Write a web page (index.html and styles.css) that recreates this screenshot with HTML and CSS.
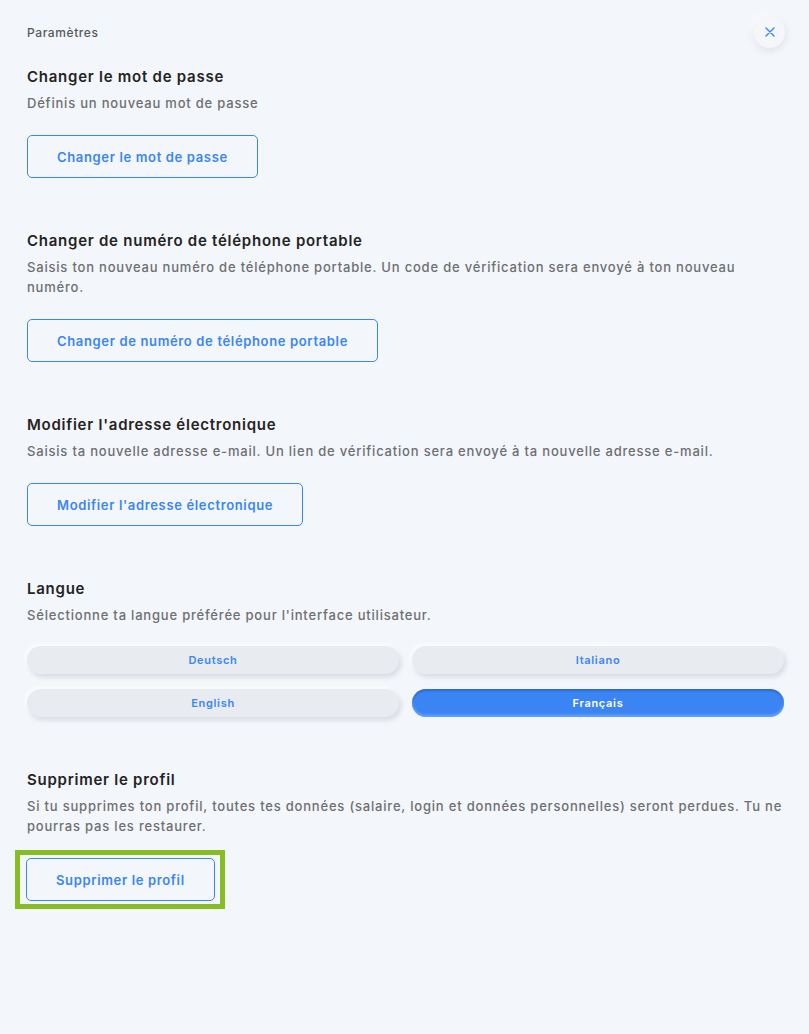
FILE: index.html
```html
<!DOCTYPE html>
<html lang="fr">
<head>
<meta charset="utf-8">
<title>Paramètres</title>
<link rel="stylesheet" href="styles.css">
</head>
<body>
<div class="page">
  <header class="topbar">
    <span class="title">Paramètres</span>
    <button class="close" aria-label="Fermer">
      <svg width="10" height="10" viewBox="0 0 10 10"><path d="M1 1L9 9M9 1L1 9" stroke="#3a86f5" stroke-width="1.4" stroke-linecap="round" fill="none"/></svg>
    </button>
  </header>

  <section class="section">
    <h2 class="heading">Changer le mot de passe</h2>
    <p class="desc">Définis un nouveau mot de passe</p>
    <button class="btn">Changer le mot de passe</button>
  </section>

  <section class="section">
    <h2 class="heading">Changer de numéro de téléphone portable</h2>
    <p class="desc">Saisis ton nouveau numéro de téléphone portable. Un code de vérification sera envoyé à ton nouveau numéro.</p>
    <button class="btn">Changer de numéro de téléphone portable</button>
  </section>

  <section class="section">
    <h2 class="heading">Modifier l'adresse électronique</h2>
    <p class="desc">Saisis ta nouvelle adresse e-mail. Un lien de vérification sera envoyé à ta nouvelle adresse e-mail.</p>
    <button class="btn">Modifier l'adresse électronique</button>
  </section>

  <section class="section">
    <h2 class="heading">Langue</h2>
    <p class="desc">Sélectionne ta langue préférée pour l'interface utilisateur.</p>
    <div class="langs">
      <button class="lang">Deutsch</button>
      <button class="lang">Italiano</button>
      <button class="lang">English</button>
      <button class="lang active">Français</button>
    </div>
  </section>

  <section class="section">
    <h2 class="heading">Supprimer le profil</h2>
    <p class="desc">Si tu supprimes ton profil, toutes tes données (salaire, login et données personnelles) seront perdues. Tu ne pourras pas les restaurer.</p>
    <div class="highlight">
      <button class="btn">Supprimer le profil</button>
    </div>
  </section>
</div>
</body>
</html>
```

FILE: styles.css
```css
* { box-sizing: border-box; }
html, body { margin: 0; padding: 0; }
body {
  background: #f3f6fa;
  font-family: "Inter", "Liberation Sans", sans-serif;
  color: #222;
  min-height: 1034px;
}
.page {
  padding: 0 25px 40px 27px;
}
.topbar {
  display: flex;
  justify-content: space-between;
  align-items: center;
  padding-top: 16px;
  height: 48px;
  margin-right: -1px;
}
.title {
  font-size: 12px;
  font-weight: 500;
  letter-spacing: 0.6px;
  color: #555a60;
}
.close {
  width: 31px;
  height: 31px;
  border-radius: 50%;
  border: none;
  background: #f4f6fa;
  box-shadow: 0 2px 8px rgba(40, 60, 90, 0.12), -3px -3px 8px rgba(255,255,255,0.9);
  display: flex;
  align-items: center;
  justify-content: center;
  padding: 0;
  cursor: pointer;
}
.section {
  margin-top: 19px;
}
.section + .section {
  margin-top: 53px;
}
.heading {
  margin: 0 0 6px 0;
  font-size: 15px;
  line-height: 20px;
  font-weight: 600;
  letter-spacing: 0.75px;
  color: #232323;
}
.desc {
  margin: 0 -12px 0 0;
  font-size: 13px;
  line-height: 20px;
  font-weight: 500;
  letter-spacing: 0.8px;
  color: #6d6f73;
}
.btn {
  margin-top: 22px;
  height: 43px;
  padding: 0 29px;
  border: 1px solid #3a86f5;
  border-radius: 5px;
  background: transparent;
  color: #3a86f5;
  font-family: inherit;
  font-size: 13px;
  font-weight: 600;
  letter-spacing: 0.65px;
  cursor: pointer;
}
.langs {
  margin-top: 21px;
  display: grid;
  grid-template-columns: 1fr 1fr;
  column-gap: 13px;
  row-gap: 15px;
}
.lang {
  height: 28px;
  border: none;
  border-radius: 14px;
  background: #e8ebf0;
  color: #3a86f5;
  font-family: inherit;
  font-size: 11px;
  font-weight: 600;
  letter-spacing: 0.7px;
  box-shadow: 2px 3px 5px rgba(40, 60, 90, 0.14), -2px -2px 5px rgba(255,255,255,0.9);
  cursor: pointer;
}
.lang.active {
  background: #3a84f4;
  color: #fff;
  box-shadow: inset 0 2px 2px rgba(20, 60, 150, 0.35), inset 0 -2px 3px rgba(150, 190, 255, 0.6);
}
.highlight {
  display: inline-block;
  margin: 14px 0 0 -12px;
  border: 5px solid #86bc24;
  padding: 3px 5px 3px 6px;
}
.highlight .btn {
  margin-top: 0;
  display: block;
}
```
